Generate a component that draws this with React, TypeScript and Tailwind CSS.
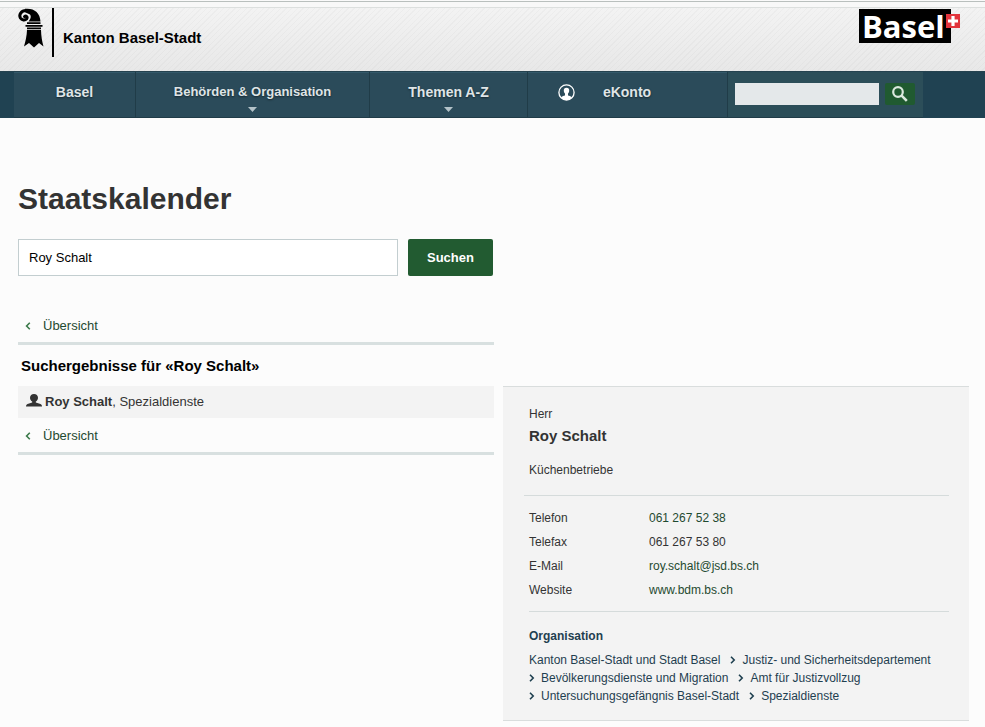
import React, { useState } from "react";
import clsx from "clsx";

/* ─── Data ────────────────────────────────────────────── */

type NavItem = {
  label: string;
  className: string;
  hasMenu?: boolean;
  hasIcon?: boolean;
};

const NAV_ITEMS: NavItem[] = [
  { label: "Basel", className: "w-[122px] text-sm" },
  {
    label: "Behörden & Organisation",
    className: "w-[234px] text-[13px]",
    hasMenu: true,
  },
  { label: "Themen A-Z", className: "w-[158px] text-sm", hasMenu: true },
  { label: "eKonto", className: "w-[200px] text-sm", hasIcon: true },
];

const CONTACT_ROWS = [
  { label: "Telefon", value: "061 267 52 38", href: "tel:+41612675238" },
  { label: "Telefax", value: "061 267 53 80" },
  {
    label: "E-Mail",
    value: "roy.schalt@jsd.bs.ch",
    href: "mailto:roy.schalt@jsd.bs.ch",
  },
  { label: "Website", value: "www.bdm.bs.ch", href: "#website" },
];

const ORGANISATION = [
  "Kanton Basel-Stadt und Stadt Basel",
  "Justiz- und Sicherheitsdepartement",
  "Bevölkerungsdienste und Migration",
  "Amt für Justizvollzug",
  "Untersuchungsgefängnis Basel-Stadt",
  "Spezialdienste",
];

/* ─── Icons ───────────────────────────────────────────── */

function CrosierLogo() {
  return (
    <svg width="28" height="40" viewBox="0 0 28 40" aria-hidden="true">
      <path
        d="M8 .8C17 -.2 23 4.500 23.500 13.500H11.500C13.500 11 14.500 8.500 13 6.500L8 4.200Z"
        fill="#000"
      />
      <path
        d="M7.500 8.600C9 7.300 11 9 9.500 11C8 12.600 4.800 12.300 3.400 10C1.700 7 4 2.500 9 2.500"
        fill="none"
        stroke="#000"
        strokeWidth="3"
        strokeLinecap="round"
      />
      <path
        d="M10 15.200H23.500M8.500 17.800H25.500M10 20.400H24"
        stroke="#000"
        strokeWidth="1.700"
      />
      <path
        d="M10 22H24C24.200 28 25 33 26.500 38.500L22 35L17 39.500L12 35L7 38.500C8.500 33 9.800 28 10 22Z"
        fill="#000"
      />
    </svg>
  );
}

function AccountIcon() {
  return (
    <svg width="17" height="17" viewBox="0 0 17 17" aria-hidden="true">
      <circle cx="8.500" cy="8.500" r="7.600" fill="none" stroke="#fff" strokeWidth="1.300" />
      <path
        d="M8.500 3.800C10.500 3.800 11.300 5 11.200 6.500C11.200 7.900 10.700 8.800 10 9.400V11.400C11.600 11.800 13.200 12.400 14 13.400C11.500 16.900 5.500 16.900 3 13.400C3.800 12.400 5.400 11.800 7 11.400V9.400C6.300 8.800 5.800 7.900 5.800 6.500C5.700 5 6.500 3.800 8.500 3.800Z"
        fill="#fff"
      />
    </svg>
  );
}

function SearchIcon() {
  return (
    <svg width="16" height="16" viewBox="0 0 16 16" fill="none" stroke="#dbe8de" aria-hidden="true">
      <circle cx="6" cy="6" r="4.800" strokeWidth="2.200" />
      <path d="M9.600 9.600L14.800 14.800" strokeWidth="2.600" />
    </svg>
  );
}

function PersonIcon() {
  return (
    <svg width="16" height="13" viewBox="0 0 16 13" fill="#333" aria-hidden="true">
      <path d="M8 0C10.400 0 12 1.600 12 3.700C12 5.500 11 6.900 9.800 7.600V8.600L14.500 10C15.500 10.400 16 11.200 16 12.600H0C0 11.200 .5 10.400 1.500 10L6.200 8.600V7.600C5 6.900 4 5.500 4 3.700C4 1.600 5.600 0 8 0Z" />
    </svg>
  );
}

function Chevron({ left = false }: { left?: boolean }) {
  return (
    <svg
      width="6"
      height="8"
      viewBox="0 0 6 8"
      fill="none"
      stroke={left ? "#3b7a4a" : "currentColor"}
      strokeWidth="1.600"
      className="inline-block shrink-0"
      aria-hidden="true"
    >
      <path d={left ? "M4.800 .8L1.600 4L4.800 7.200" : "M1 .8L4.200 4L1 7.200"} />
    </svg>
  );
}

/* ─── Sections ────────────────────────────────────────── */

function Header() {
  return (
    <header className="flex h-[71px] items-start justify-between border-t border-[#fafafa] bg-[repeating-linear-gradient(135deg,#0000_0_3px,#00000006_3px_4px),linear-gradient(#f4f4f4,#e8e8e8)] pr-[25px] pl-[17px] shadow-[inset_0_1px_0_#b9bfbd,inset_0_6px_0_#f8f8f8,inset_0_7px_0_#dcdfde]">
      <a href="#home" className="flex pt-[7px]">
        <CrosierLogo />
        <span className="ml-[7px] h-[49px] w-[2px] bg-black" />
        <span className="ml-[9px] pt-5 text-[15px] leading-5 font-bold text-black">
          Kanton Basel-Stadt
        </span>
      </a>
      <a href="#basel" className="flex pt-2">
        <span className="h-[34px] w-[92px] bg-black pl-[3px] font-['Open_Sans',sans-serif] text-[31px] leading-[34px] font-bold text-white">
          Basel
        </span>
        <svg width="14" height="14" viewBox="0 0 14 14" className="-ml-[5px] mt-[5px]" aria-hidden="true">
          <rect width="14" height="14" fill="#e2343c" />
          <path d="M5.400 2H8.600V5.400H12V8.600H8.600V12H5.400V8.600H2V5.400H5.400Z" fill="#fff" />
        </svg>
      </a>
    </header>
  );
}

function Navigation() {
  return (
    <nav className="flex h-[47px] border-t border-[#25424f] bg-[#204252] pl-[14px]">
      {NAV_ITEMS.map((item) => (
        <a
          key={item.label}
          href="#nav"
          className={clsx(
            "flex flex-col items-center border-r border-b border-[#203c48] bg-[#2b4b5a] pt-[10px] font-bold text-[#dfe4e6] shadow-[inset_0_1px_0_#34596a] text-shadow-[0_1px_2px_#00000080]",
            item.className,
          )}
        >
          <span className="flex items-center gap-7 leading-5">
            {item.hasIcon && <AccountIcon />}
            <span className={item.hasIcon ? "pr-[46px]" : ""}>
              {item.label}
            </span>
          </span>
          {item.hasMenu && (
            <svg width="9" height="5" viewBox="0 0 9 5" className="mt-[5px]" aria-hidden="true">
              <path d="M0 0H9L4.500 5Z" fill="#b4c3c9" />
            </svg>
          )}
        </a>
      ))}
      <form
        className="flex gap-[6px] border-b border-[#203c48] bg-[#2c4e59] px-2 pt-[11px] pl-[7px]"
        onSubmit={(e) => e.preventDefault()}
      >
        <input
          type="text"
          aria-label="Website durchsuchen"
          className="h-[22px] w-36 bg-[#e4e8ea] px-1 text-[13px] text-black"
        />
        <button
          type="submit"
          aria-label="Suche starten"
          className="flex h-[22px] w-[30px] items-center justify-center rounded-xs bg-[#205a30]"
        >
          <SearchIcon />
        </button>
      </form>
    </nav>
  );
}

function OverviewLink() {
  return (
    <a
      href="#uebersicht"
      className="flex items-center gap-3 border-b-3 border-[#d8e0e0] pt-[2px] pb-[6px] pl-[7px] text-[13px] leading-5 text-[#1f4a30]"
    >
      <Chevron left />
      Übersicht
    </a>
  );
}

function ContactPanel() {
  return (
    <section className="border-y border-[#d9dddd] bg-[#f3f3f3] pt-[18px] pr-5 pb-[15px] pl-[21px] text-xs leading-[18px] text-[#333]">
      <div className="border-b border-[#d5dbdb] pb-4 pl-[5px]">
        <p>Herr</p>
        <h3 className="pt-[3px] text-[15px] leading-5 font-bold">Roy Schalt</h3>
        <p className="pt-[15px]">Küchenbetriebe</p>
      </div>
      <div className="pl-[5px]">
        <dl className="grid grid-cols-[120px_1fr] gap-y-[6px] border-b border-[#d5dbdb] pt-[13px] pb-3">
          {CONTACT_ROWS.map((row) => (
            <React.Fragment key={row.label}>
              <dt>{row.label}</dt>
              <dd>
                {row.href ? (
                  <a href={row.href} className="text-[#1f4a30]">
                    {row.value}
                  </a>
                ) : (
                  row.value
                )}
              </dd>
            </React.Fragment>
          ))}
        </dl>
        <h4 className="pt-[15px] pb-[6px] font-bold text-[#1f4050]">
          Organisation
        </h4>
        <ul className="flex flex-wrap gap-x-[10px] text-[#1f4050]">
          {ORGANISATION.map((name, i) => (
            <li key={name} className="flex items-center gap-[6px]">
              {i > 0 && <Chevron />}
              <a href="#organisation">{name}</a>
            </li>
          ))}
        </ul>
      </div>
    </section>
  );
}

/* ─── Page ────────────────────────────────────────────── */

export default function App() {
  const [query, setQuery] = useState("Roy Schalt");

  return (
    <div className="min-h-screen bg-[#fcfcfc] font-['Liberation_Sans',Arial,sans-serif]">
      <Header />
      <Navigation />

      <main className="pt-[61px] pr-4 pb-[6px] pl-[18px]">
        <h1 className="text-[30px] leading-10 font-bold text-[#333]">
          Staatskalender
        </h1>

        <form
          className="flex gap-[10px] pt-5"
          onSubmit={(e) => e.preventDefault()}
        >
          <input
            type="text"
            aria-label="Suchbegriff"
            value={query}
            onChange={(e) => setQuery(e.target.value)}
            className="h-[37px] w-[380px] border border-[#c3ced0] bg-white px-[10px] text-[13px] text-black"
          />
          <button
            type="submit"
            className="h-[37px] rounded-xs bg-[#225b31] px-[19px] text-[13px] font-bold text-white"
          >
            Suchen
          </button>
        </form>

        <div className="grid grid-cols-[476fr_466fr] items-start gap-x-[9px] pt-[38px]">
          <div>
            <OverviewLink />
            <h2 className="pt-[11px] pb-[10px] pl-[3px] text-[15px] leading-5 font-bold text-black">
              Suchergebnisse für «Roy Schalt»
            </h2>
            <a
              href="#roy-schalt"
              className="mb-[6px] flex h-8 items-center gap-[3px] bg-[#f3f3f3] pl-2 text-[13px] text-[#333]"
            >
              <span className="pb-1">
                <PersonIcon />
              </span>
              <span>
                <strong>Roy Schalt</strong>, Spezialdienste
              </span>
            </a>
            <OverviewLink />
          </div>
          <div className="pt-[72px]">
            <ContactPanel />
          </div>
        </div>
      </main>
    </div>
  );
}
